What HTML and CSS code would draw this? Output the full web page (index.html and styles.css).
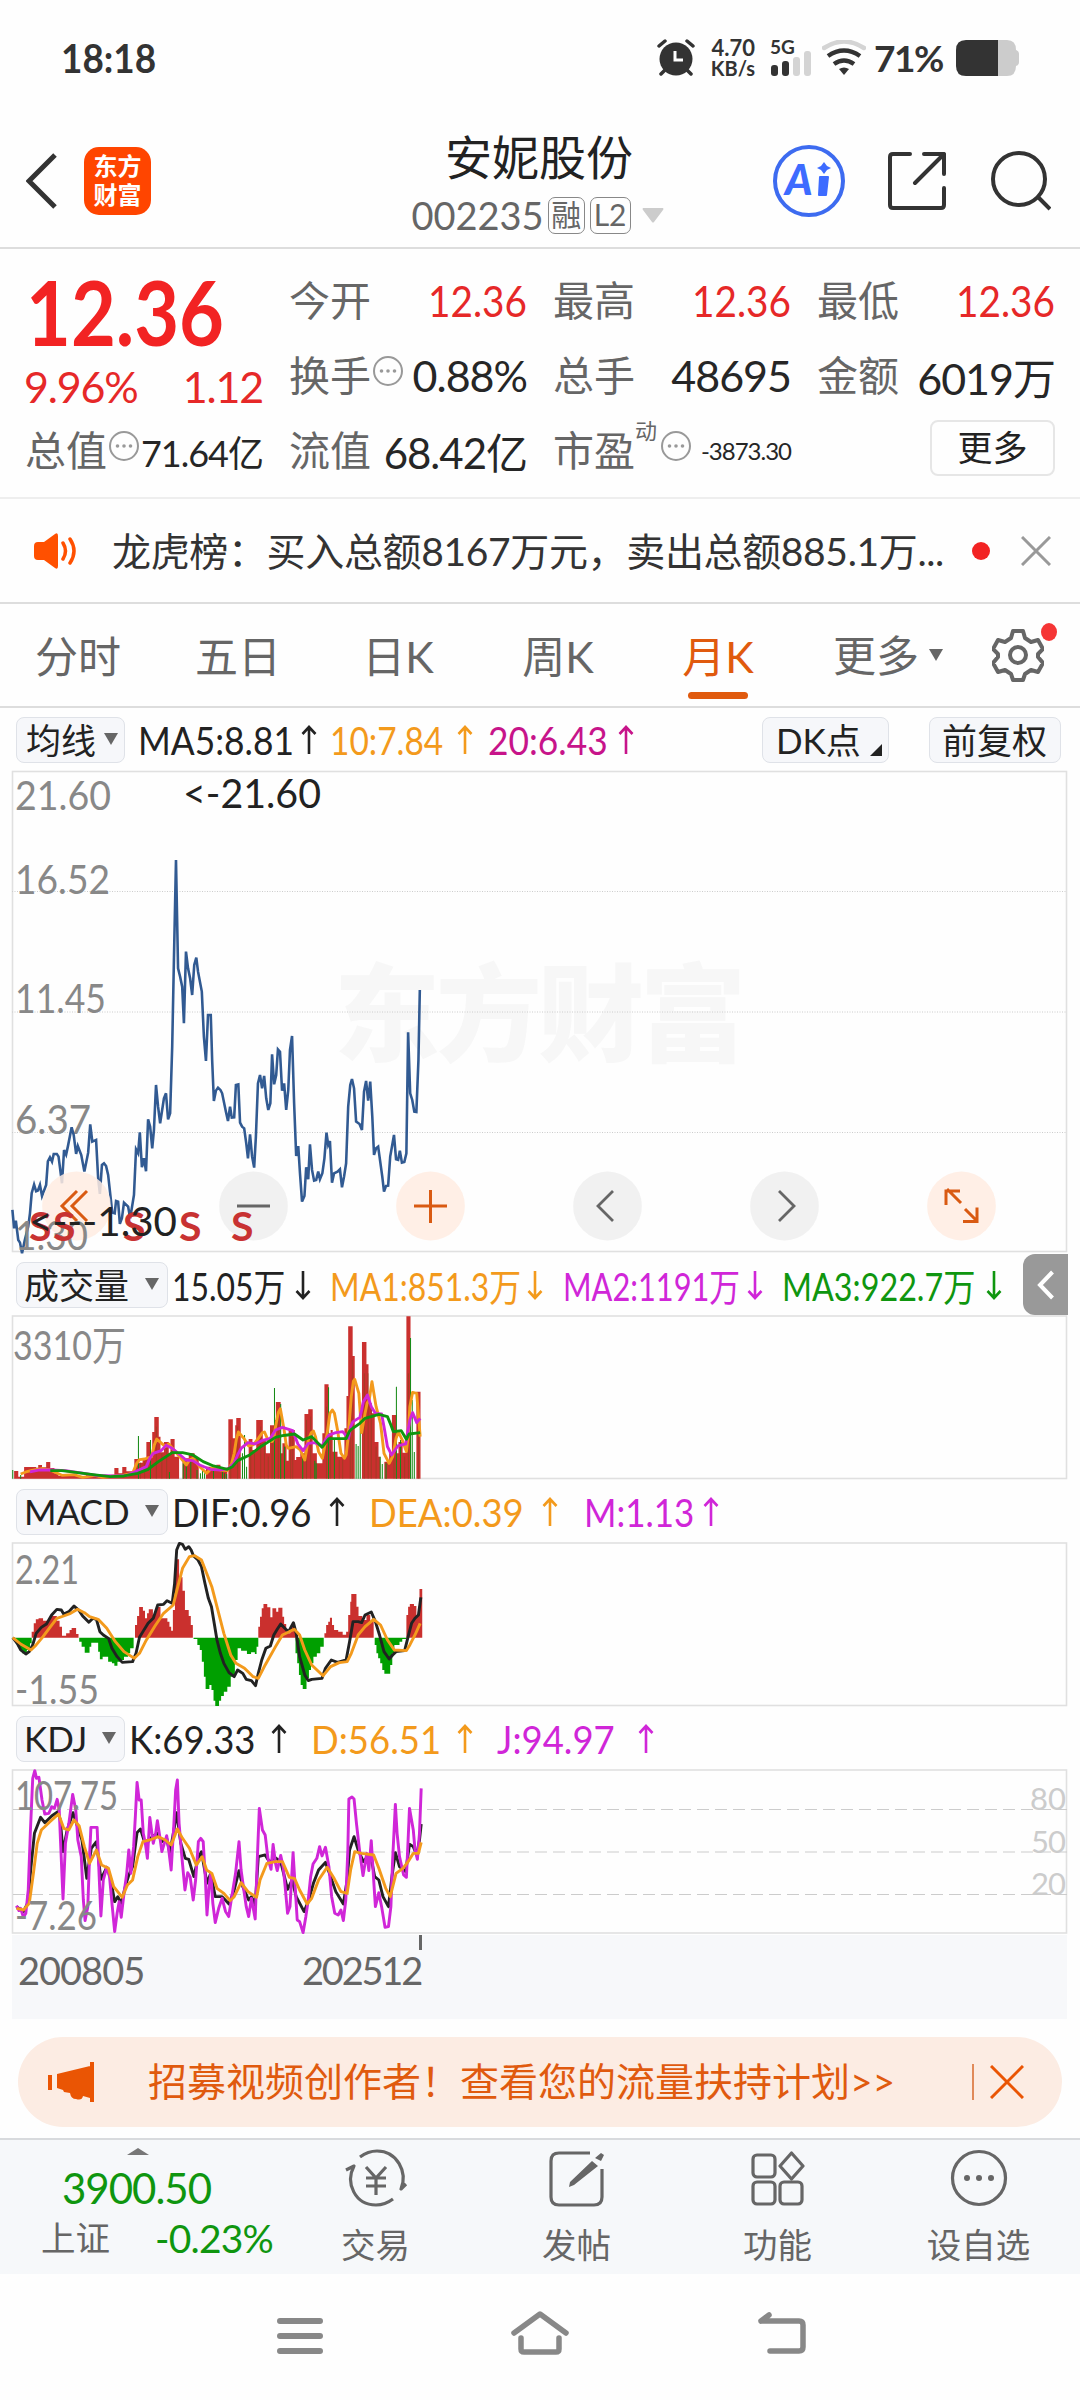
FILE: index.html
```html
<!DOCTYPE html>
<html lang="zh-CN">
  <head>
    <meta charset="utf-8">
    <title>安妮股份 002235</title>
    <link rel="stylesheet" href="styles.css">
  </head>
  <body>
    <svg class="symbols">
      <symbol id="up" viewBox="0 0 16 30"><path d="M8 29V2M1.500 9L8 2l6.500 7" fill="none" stroke="currentColor" stroke-width="2.600"/></symbol>
      <symbol id="down" viewBox="0 0 16 30"><path d="M8 1v27M1.500 21L8 28l6.500-7" fill="none" stroke="currentColor" stroke-width="2.600"/></symbol>
      <symbol id="info" viewBox="0 0 32 32">
        <circle cx="16" cy="16" r="14" fill="none" stroke="#999" stroke-width="2"/>
        <circle cx="9.500" cy="16" r="1.800" fill="#999"/><circle cx="16" cy="16" r="1.800" fill="#999"/><circle cx="22.500" cy="16" r="1.800" fill="#999"/>
      </symbol>
    </svg>

    <!-- phone status bar -->
    <div class="status-bar">
      <div class="clock"><span>18:18</span></div>
      <svg class="alarm" width="38" height="38" viewBox="0 0 38 38">
        <circle cx="19" cy="20" r="16.500" fill="#333"/>
        <path d="M2 7l6-5M36 7l-6-5M4 35l5-5M34 35l-5-5" stroke="#333" stroke-width="3.500" stroke-linecap="round"/>
        <path d="M18 12v9h8" fill="none" stroke="#fff" stroke-width="3"/>
      </svg>
      <div class="net-speed"><span class="speed">4.70</span><span class="unit">KB/s</span></div>
      <div class="signal">
        <span>5G</span>
        <svg width="42" height="26" viewBox="0 0 42 26">
          <rect x="1" y="15" width="7" height="11" rx="3" fill="#333"/><rect x="12" y="11" width="7" height="15" rx="3" fill="#333"/>
          <rect x="23" y="7" width="7" height="19" rx="3" fill="#d4d4d4"/><rect x="34" y="1" width="7" height="25" rx="3" fill="#d4d4d4"/>
        </svg>
      </div>
      <svg class="wifi" width="44" height="36" viewBox="0 0 44 36" fill="none" stroke-width="4.500">
        <path d="M2 8Q22-5 42 8" stroke="#d4d4d4" stroke-linecap="round"/>
        <path d="M6 16Q22 5 38 16M12 24Q22 17 32 24" stroke="#333"/>
        <path d="M17 29Q22 26 27 29L22 35z" fill="#333"/>
      </svg>
      <span class="percent">71%</span>
      <svg class="battery" width="64" height="36" viewBox="0 0 64 36">
        <path d="M42 0h9q9 0 9 10 3 1 3 4v8q0 3-3 4 0 10-9 10h-9z" fill="#ccc"/>
        <path d="M42 0H10Q0 0 0 10v16q0 10 10 10h32z" fill="#333"/>
      </svg>
    </div>

    <!-- title bar -->
    <div class="header">
      <div class="header-left">
        <svg width="32" height="56" viewBox="0 0 32 56"><path d="M29 2L3 28l26 26" fill="none" stroke="#333" stroke-width="5"/></svg>
        <div class="logo">东方<br>财富</div>
      </div>
      <div class="header-title">
        <div class="stock-name">安妮股份</div>
        <div class="stock-code"><span class="code">002235</span><span class="tag">融</span><span class="tag tag-l2">L2</span>
          <svg width="22" height="15" viewBox="0 0 22 15"><path d="M1 0h20q1 1 0 2L12 14q-1 1-2 0L1 2Q0 1 1 0z" fill="#ccc"/></svg></div>
      </div>
      <div class="header-right">
        <svg width="72" height="72" viewBox="0 0 72 72">
          <circle cx="36" cy="36" r="34" fill="none" stroke="#3d6bf0" stroke-width="4"/>
          <text class="ai-text" x="12" y="50">A</text>
          <path d="M47 31h8q1 0 1 1l-2 18q0 1-1 1h-7q-1 0-1-1l1-18q0-1 1-1zM51 17l3 4 4 2-4 2-3 4-3-4-4-2 4-2z" fill="#3d6bff"/>
        </svg>
        <svg class="share" width="58" height="58" viewBox="0 0 58 58" fill="none" stroke="#333" stroke-width="4" stroke-linecap="round" stroke-linejoin="round">
          <path d="M22 2H5Q2 2 2 5v48q0 3 3 3h48q3 0 3-3V36M36 2h20v20M56 2L27 31"/>
        </svg>
        <svg width="60" height="60" viewBox="0 0 60 60" fill="none" stroke="#333" stroke-width="4"><circle cx="28" cy="28" r="26"/><path d="M47 46l12 12"/></svg>
      </div>
    </div>

    <!-- quote -->
    <div class="quote">
      <div class="price-box">
        <div class="price">12.36</div>
        <div class="change"><span>9.96%</span><span>1.12</span></div>
      </div>
      <div class="cell"><i>今开</i><b class="red">12.36</b></div>
      <div class="cell"><i>最高</i><b class="red">12.36</b></div>
      <div class="cell"><i>最低</i><b class="red">12.36</b></div>
      <div class="cell"><i>换手</i><svg class="info"><use href="#info"/></svg><b class="turnover">0.88%</b></div>
      <div class="cell"><i>总手</i><b class="volume">48695</b></div>
      <div class="cell"><i>金额</i><b>6019万</b></div>
      <div class="cell"><i>总值</i><svg class="info"><use href="#info"/></svg><b class="total-value">71.64亿</b></div>
      <div class="cell"><i>流值</i><b class="float-value">68.42亿</b></div>
      <div class="cell"><i>市盈</i><sup>动</sup><svg class="info info-pe"><use href="#info"/></svg><b class="pe">-3873.30</b></div>
      <div class="cell"><div class="more-button">更多</div></div>
    </div>

    <!-- news strip -->
    <div class="news">
      <svg width="44" height="36" viewBox="0 0 44 36">
        <path d="M0 13q0-4 4-4h6L21 1q3-2 3 2v30q0 4-3 2L10 27H4q-4 0-4-4z" fill="#ff5000"/>
        <path d="M29 10q5 8 0 16M36 6q8 12 0 24" fill="none" stroke="#ff5000" stroke-width="3.500" stroke-linecap="round"/>
      </svg>
      <div class="news-text">龙虎榜：买入总额8167万元，卖出总额885.1万...</div>
      <span class="dot"></span>
      <svg class="news-close" width="30" height="30" viewBox="0 0 30 30"><path d="M1 1l28 28M29 1L1 29" stroke="#999" stroke-width="3"/></svg>
    </div>

    <!-- period tabs -->
    <div class="tabs">
      <div class="tab">分时</div>
      <div class="tab">五日</div>
      <div class="tab">日K</div>
      <div class="tab">周K</div>
      <div class="tab active">月K</div>
      <div class="tab-more">更多<span class="tri"></span></div>
      <div class="gear">
        <svg width="52" height="54" viewBox="0 0 52 54" fill="none" stroke="#666" stroke-width="4">
          <path d="M21 3h10l2 7 6 4 7-2 5 9-5 5v3l5 6-5 9-7-2-6 4-2 6H21l-2-6-6-4-7 2-5-9 5-6v-3l-5-5 5-9 7 2 6-4z" stroke-linejoin="round"/>
          <circle cx="26" cy="27" r="8"/>
        </svg>
        <span class="dot"></span>
      </div>
    </div>

    <!-- moving averages -->
    <div class="bar ma-bar">
      <div class="pill">均线<span class="tri"></span></div>
      <div class="val ma5"><span>MA5:8.81</span></div><svg class="arrow"><use href="#up"/></svg>
      <div class="val orange ma10"><span>10:7.84</span></div><svg class="arrow orange"><use href="#up"/></svg>
      <div class="val pink ma20"><span>20:6.43</span></div><svg class="arrow pink"><use href="#up"/></svg>
      <div class="pill dk">DK点<svg width="12" height="12"><path d="M12 0v12H0z" fill="#222"/></svg></div>
      <div class="pill fq">前复权</div>
    </div>
    <svg class="chart" width="1080" height="482" viewBox="0 771 1080 482">
      <text class="watermark" x="334" y="1053" textLength="412">东方财富</text>
      <rect x="12.500" y="771.500" width="1054" height="480" fill="none" stroke="#e0e0e0" stroke-width="1.600"/>
      <path d="M12 891.500H1067M12 1012H1067M12 1132.500H1067" stroke="#ccc" stroke-dasharray="1 1.500"/>
      <g class="axis-text">
        <text x="15" y="810" textLength="96" lengthAdjust="spacingAndGlyphs">21.60</text>
        <text x="15" y="894" textLength="95" lengthAdjust="spacingAndGlyphs">16.52</text>
        <text x="15" y="1013" textLength="91" lengthAdjust="spacingAndGlyphs">11.45</text>
        <text x="15" y="1134" textLength="76" lengthAdjust="spacingAndGlyphs">6.37</text>
      </g>
      <g transform="translate(0 760) scale(.3444 .3333)">
        <polyline class="price-line" points="36,1350 41,1405 46,1382 53,1440 58,1448 64,1480 72,1440 82,1400 87,1360 92,1300 99,1274 105,1294 110,1292 116,1275 122,1308 134,1275 139,1204 145,1192 151,1205 156,1182 165,1182 170,1190 180,1270 186,1170 192,1184 197,1160 208,1102 214,1125 221,1182 226,1158 236,1185 245,1235 256,1178 262,1093 268,1145 279,1140 285,1255 290,1302 296,1215 302,1210 308,1218 314,1245 326,1358 333,1360 337,1323 343,1325 348,1392 354,1375 360,1328 372,1340 378,1375 389,1305 395,1168 401,1180 406,1117 412,1222 418,1195 424,1234 430,1078 436,1100 442,1165 447,1110 453,975 459,1040 465,1090 476,1015 482,1000 488,1078 494,1060 500,860 505,600 511,300 517,625 523,650 529,680 534,790 540,575 546,625 552,655 558,705 564,615 570,593 575,635 586,695 592,830 598,903 604,765 612,765 616,900 621,1023 627,992 633,983 640,990 645,1000 656,1055 662,1083 668,1040 673,1073 680,1072 685,975 692,973 697,1088 703,1100 709,1105 715,1150 720,1195 726,1123 732,1190 738,1223 743,1130 749,970 755,945 761,985 767,948 773,1015 779,1050 785,1030 790,883 796,973 802,945 807,868 813,875 819,992 825,970 831,1050 837,990 842,870 848,828 854,1030 860,1188 866,1158 871,1240 877,1325 884,1308 889,1222 895,1258 900,1153 906,1230 912,1262 918,1260 924,1235 929,1258 936,1240 942,1195 948,1118 953,1155 958,1143 964,1268 970,1240 980,1235 987,1228 993,1282 999,1250 1005,1210 1011,1040 1017,975 1022,957 1028,985 1034,1085 1044,1092 1051,1110 1057,995 1063,963 1069,1022 1075,965 1081,1070 1086,1185 1092,1165 1098,1160 1104,1205 1110,1250 1115,1295 1121,1278 1127,1277 1133,1190 1144,1125 1150,1198 1156,1200 1161,1172 1167,1208 1174,1206 1180,1180 1185,817 1191,1000 1197,1020 1203,1055 1209,1056 1215,900 1219,690"/>
      </g>
      <!-- chart controls -->
      <g fill="#ffece2" fill-opacity=".85"><circle cx="76.500" cy="1206" r="34.400"/><circle cx="430.500" cy="1206" r="34.400"/><circle cx="961.500" cy="1206" r="34.400"/></g>
      <g fill="#eee" fill-opacity=".8"><circle cx="253.500" cy="1206" r="34.400"/><circle cx="607.500" cy="1206" r="34.400"/><circle cx="784.500" cy="1206" r="34.400"/></g>
      <path d="M77 1191l-15 15 15 15M87 1191l-15 15 15 15M414 1206h33M430.500 1190v33M961 1203l-14-14M946 1205v-14h14M965 1209l12 12M963 1221.500h14v-14" fill="none" stroke="#d95a12" stroke-width="3"/>
      <path d="M237 1206h33M613 1191l-15 15 15 15M779 1191l15 15-15 15" fill="none" stroke="#666" stroke-width="2.800"/>
      <g class="axis-text"><text x="15" y="1250" textLength="73" lengthAdjust="spacingAndGlyphs">1.30</text></g>
      <g class="sell"><text x="29" y="1241">S</text><text x="53" y="1241">S</text><text x="123" y="1241">S</text><text x="179" y="1241">S</text><text x="231" y="1241">S</text></g>
      <g class="mark"><text x="183" y="808" textLength="138" lengthAdjust="spacingAndGlyphs">&lt;-21.60</text><text x="29" y="1236" textLength="148" lengthAdjust="spacingAndGlyphs">&lt;---1.30</text></g>
    </svg>

    <!-- volume -->
    <div class="bar vol-bar">
      <div class="pill">成交量<span class="tri"></span></div>
      <div class="val v0"><span>15.05万</span></div><svg class="arrow"><use href="#down"/></svg>
      <div class="val orange v1"><span>MA1:851.3万</span></div><svg class="arrow orange"><use href="#down"/></svg>
      <div class="val magenta v2"><span>MA2:1191万</span></div><svg class="arrow magenta"><use href="#down"/></svg>
      <div class="val green v3"><span>MA3:922.7万</span></div><svg class="arrow green"><use href="#down"/></svg>
      <div class="side-tab"><svg width="18" height="30" viewBox="0 0 18 30"><path d="M15.500 2L3 15l12.500 13" fill="none" stroke="#fff" stroke-width="4"/></svg></div>
    </div>
    <svg class="chart" width="1080" height="164" viewBox="0 1316 1080 164">
      <rect x="12.500" y="1316" width="1054" height="162.500" fill="none" stroke="#e0e0e0" stroke-width="1.600"/>
      <g class="axis-text"><text x="13" y="1360" textLength="113" lengthAdjust="spacingAndGlyphs">3310万</text></g>
      <g transform="translate(0 1240) scale(.3444 .3333)">
        <path fill="#ca302e" d="M41 716V693H53V710H70V681H105V683H111V675H122V682H134V666H146V684H158V700H170V708H180V703H215V708H250V705H285V712H332V684H344V700H355V681H367V694H390V657H402V668H414V656H425V606H437V640H442V576H448V531H461V590H466V637H476V606H490V640H495V597H507V650H520V716H530V660H536V655H548V640H565V655H577V716H598V680H615V690H628V674H640V685H660V716H663V538H676V595H683V556H686V534H699V716H722V597H733V630H744V540H763V600H772V640H784V556H797V540H801V486H815V640H820V610H832V662H838V570H856V660H860V651H872V640H884V522H895V508H908V640H920V670H936V580H942V433H954V580H960V570H966V635H980V650H1000V565H1006V468H1011V259H1024V348H1030V716H1051V306H1064V373H1070V490H1080V520H1088V606H1099V650H1104V716H1116V665H1130V640H1138V525H1151V640H1157V606H1169V638H1180V229H1192V716H1209V455H1221V716z"/>
        <path class="thin" d="M37 716V690M60 716V705M402 716V588M437 716V600M492 716V696M532 716V670M541 716V675M554 716V665M572 716V690M582 716V700M588 716V688M594 716V700M620 716V690M646 716V695M652 716V700M658 716V702M704 716V640M710 716V585M716 716V680M797 716V444M815 716V492M826 716V620M879 716V655M914 716V662M918 716V670M954 716V442M971 716V600M1034 716V612M1040 716V618M1046 716V560M1104 716V650M1110 716V672M1121 716V670M1151 716V440M1163 716V600M1192 716V294M1197 716V480M1203 716V636"/>
        <path class="stripe" d="M408 716V668M420 716V660M454 716V560M470 716V640M484 716V620M670 716V600M690 716V560M728 716V610M739 716V640M757 716V560M768 716V610M779 716V650M790 716V570M808 716V510M844 716V590M850 716V590M890 716V540M902 716V530M948 716V500M960 716V590M985 716V660M995 716V660M1017 716V500M1023 716V360M1058 716V400M1069 716V400M1078 716V500M1092 716V620M1144 716V560M1175 716V650M1186 716V400M1215 716V500"/>
        <polyline class="line orange" points="60,702 75,696 100,690 122,686 146,690 160,697 180,706 215,704 240,712 275,706 300,712 330,708 355,706 385,700 397,670 405,659 420,657 440,650 448,615 455,597 480,620 490,612 505,630 520,648 541,675 550,660 560,655 580,680 600,700 615,684 640,690 660,692 672,672 680,640 686,600 692,576 708,595 722,618 735,615 750,595 762,578 768,576 778,600 790,605 795,595 800,560 808,518 814,506 825,570 831,615 837,625 860,620 872,630 885,660 895,600 904,578 910,573 916,590 925,635 936,655 950,580 958,520 965,510 971,520 980,570 990,640 1000,655 1005,645 1010,600 1020,470 1026,424 1030,418 1042,460 1050,578 1060,520 1066,490 1072,480 1080,425 1092,500 1105,550 1115,640 1130,670 1140,650 1150,595 1157,576 1168,600 1180,635 1185,590 1190,500 1198,457 1210,460 1220,590"/>
        <polyline class="line magenta" points="87,696 115,690 150,690 190,692 230,698 280,706 330,708 370,706 400,692 425,680 435,655 445,640 468,632 482,616 500,625 520,642 540,660 560,662 580,675 610,688 640,690 663,686 680,668 690,645 700,625 720,608 740,612 760,602 785,595 800,570 820,562 850,572 865,612 880,632 895,610 915,608 935,618 945,600 955,585 975,578 995,575 1012,595 1018,560 1025,545 1045,532 1050,510 1055,485 1067,465 1078,500 1090,520 1108,522 1115,560 1125,620 1137,645 1155,618 1178,612 1190,540 1198,518 1210,548 1220,535"/>
        <polyline class="line green" points="146,692 180,692 220,697 270,704 320,710 360,708 400,700 430,688 460,665 500,638 530,638 560,645 590,665 620,678 660,688 675,680 690,662 725,645 760,618 785,602 800,592 820,587 835,585 855,582 880,600 905,590 935,622 948,605 955,596 1005,596 1014,575 1020,568 1045,550 1060,535 1100,523 1125,530 1135,555 1142,575 1165,572 1180,598 1188,582 1220,578"/>
      </g>
    </svg>

    <!-- MACD -->
    <div class="bar">
      <div class="pill macd-pill">MACD<span class="tri"></span></div>
      <div class="val m0"><span>DIF:0.96</span></div><svg class="arrow"><use href="#up"/></svg>
      <div class="val orange m1"><span>DEA:0.39</span></div><svg class="arrow orange"><use href="#up"/></svg>
      <div class="val magenta m2"><span>M:1.13</span></div><svg class="arrow magenta"><use href="#up"/></svg>
    </div>
    <svg class="chart" width="1080" height="164" viewBox="0 1543 1080 164">
      <rect x="12.500" y="1543" width="1054" height="162.500" fill="none" stroke="#e0e0e0" stroke-width="1.600"/>
      <g class="axis-text"><text x="15" y="1584" textLength="64" lengthAdjust="spacingAndGlyphs">2.21</text><text x="15" y="1704" textLength="84" lengthAdjust="spacingAndGlyphs">-1.55</text></g>
      <g transform="translate(0 1490) scale(.3444 .3333)">
        <path fill="#ca302e" d="M92 443V425H98V400H104V388H112V385H125V392H140V388H146V378H165V392H173V410H180V437H192V430H202V420H208V414H221V432H228V443zM392 443V405H398V378H404V351H415V362H421V385H427V370H432V358H444V375H450V365H455V351H466V385H486V395H492V410H497V422H502V360H508V208H520V262H530V302H537V360H548V378H554V405H560V443zM750 443V410H755V380H760V355H765V342H776V352H785V382H791V355H802V365H808V353H820V380H825V402H831V425H836V430H843V415H848V400H855V425H861V443zM942 443V430H947V405H953V395H958V383H964V405H970V420H982V425H995V434H1005V425H1011V375H1017V335H1020V312H1035V350H1041V378H1052V390H1064V375H1075V395H1085V443zM1180 443V375H1185V350H1190V342H1202V348H1209V375H1214V350H1218V297H1226V443z"/>
        <path fill="#009f00" d="M40 443V450H46V463H52V472H58V482H64V490H78V480H87V460H92V443zM230 443V455H237V470H246V488H260V470H265V458H285V485H290V508H298V500H314V515H325V520H332V527H341V515H350V510H360V500H372V490H378V475H388V443zM562 443V447H573V465H580V480H586V515H592V560H597V597H608V585H614V600H620V632H625V648H636V632H642V618H650V605H660V590H670V560H682V510H690V475H700V482H717V492H729V487H740V492H745V470H750V443zM858 443V490H863V520H868V555H873V585H879V597H890V565H897V540H903V520H910V500H920V490H930V470H940V443zM1088 443V465H1093V490H1098V505H1104V520H1110V540H1116V551H1133V525H1139V490H1145V465H1160V455H1168V447H1180V443z"/>
        <polyline class="line black" points="37,443 50,460 60,480 75,492 85,485 95,465 105,430 120,412 135,402 150,375 165,358 178,360 185,372 200,365 215,348 230,362 240,378 258,397 270,385 280,388 290,425 300,435 315,445 325,475 340,500 355,517 385,515 395,490 405,442 415,425 430,400 445,385 458,345 475,343 485,332 500,340 507,280 513,180 521,160 530,163 538,178 548,170 555,180 562,198 575,210 585,230 595,280 605,325 614,350 622,400 630,450 640,490 650,520 665,548 680,560 690,540 705,550 715,568 730,572 742,587 750,550 760,510 772,475 785,468 795,435 805,418 815,402 830,418 838,425 852,398 860,430 870,500 885,555 895,572 905,568 935,565 945,535 962,510 980,517 1005,510 1015,455 1025,395 1040,395 1050,398 1060,375 1078,366 1090,395 1102,435 1115,485 1130,507 1140,495 1150,485 1175,482 1185,440 1195,400 1205,385 1215,375 1222,322"/>
        <polyline class="line orange" points="37,443 60,462 90,480 105,465 125,440 145,412 165,385 185,378 205,370 225,358 245,368 260,380 285,388 310,415 335,455 360,485 390,505 405,490 425,450 450,408 475,370 503,345 515,295 530,235 550,200 565,197 585,210 600,250 615,290 630,350 650,430 670,495 685,520 710,535 735,560 750,565 770,525 800,470 820,435 840,425 855,418 870,435 885,480 905,525 938,557 960,530 985,518 1008,515 1020,490 1040,435 1060,410 1085,388 1105,405 1125,450 1145,480 1180,482 1190,465 1205,435 1220,400"/>
      </g>
    </svg>

    <!-- KDJ -->
    <div class="bar">
      <div class="pill kdj-pill">KDJ<span class="tri"></span></div>
      <div class="val k0"><span>K:69.33</span></div><svg class="arrow"><use href="#up"/></svg>
      <div class="val orange k1"><span>D:56.51</span></div><svg class="arrow orange"><use href="#up"/></svg>
      <div class="val magenta k2"><span>J:94.97</span></div><svg class="arrow magenta"><use href="#up"/></svg>
    </div>
    <svg class="chart" width="1080" height="165" viewBox="0 1770 1080 165">
      <rect x="12.500" y="1770" width="1054" height="163" fill="none" stroke="#e0e0e0" stroke-width="1.600"/>
      <path d="M13 1809.500H1067M13 1852H1067M13 1894.500H1067" stroke="#ccc" stroke-width="1.200" stroke-dasharray="12 6"/>
      <g class="level"><text x="1030" y="1810" textLength="36">80</text><text x="1031" y="1853" textLength="35">50</text><text x="1031" y="1895" textLength="35">20</text></g>
      <g transform="translate(0 1700) scale(.3444 .3333)">
        <polyline class="line black" points="48,620 68,635 80,610 90,500 100,400 118,352 130,368 150,348 168,335 175,360 183,455 195,390 212,338 225,380 238,420 252,535 265,445 280,425 293,538 310,502 320,530 333,605 342,590 352,610 365,555 374,525 385,500 398,398 408,387 418,420 430,425 442,410 457,400 470,425 484,415 493,460 505,390 513,338 525,430 538,475 548,478 563,530 575,475 585,455 601,550 612,520 625,590 645,590 665,612 680,570 694,512 705,560 722,600 730,590 741,615 750,470 770,465 785,490 795,470 815,485 835,568 848,540 860,590 883,635 895,605 910,550 925,510 945,487 960,530 975,575 997,612 1008,540 1015,450 1028,410 1040,450 1055,485 1075,460 1088,530 1100,540 1112,590 1128,620 1138,530 1148,458 1160,500 1178,515 1189,433 1200,440 1210,465 1218,420 1223,372"/>
        <polyline class="line magenta" points="48,617 55,632 60,625 68,652 75,640 82,570 88,400 95,235 101,212 106,235 113,232 122,300 130,342 142,340 150,320 158,325 166,298 172,330 176,430 183,597 190,430 200,370 211,283 220,330 226,420 236,470 242,600 247,662 255,620 260,470 264,382 282,382 288,530 293,648 300,540 310,502 318,530 326,620 333,695 340,640 346,605 352,652 360,580 368,520 374,450 380,520 388,440 393,350 398,247 404,300 410,300 416,400 422,430 428,475 435,352 445,430 452,400 457,362 464,410 470,455 484,407 490,450 497,510 505,370 510,270 515,240 520,370 528,470 537,570 545,518 552,530 561,600 568,540 576,425 583,415 590,425 596,530 601,645 607,560 612,520 618,610 625,668 635,625 645,595 655,635 664,650 673,590 684,520 694,425 700,510 708,570 715,620 722,650 730,595 741,657 747,480 753,325 762,390 770,405 778,475 787,508 793,433 800,490 805,512 815,466 822,500 828,560 835,640 842,620 851,458 857,560 863,660 870,665 880,698 888,650 895,600 902,530 909,492 920,475 928,440 935,468 945,442 955,500 963,590 972,640 982,645 990,630 997,662 1004,600 1010,450 1013,297 1022,291 1028,297 1035,370 1045,460 1054,527 1065,460 1071,512 1078,422 1085,540 1090,620 1100,578 1108,620 1118,682 1128,680 1135,620 1140,480 1148,313 1153,400 1160,470 1172,525 1180,532 1185,420 1189,325 1200,390 1205,450 1212,478 1218,400 1223,265"/>
        <polyline class="line orange" points="48,625 68,630 85,610 97,520 108,430 120,390 145,365 170,342 185,385 200,390 215,360 230,378 245,440 260,490 280,450 295,495 315,505 330,560 355,592 370,555 385,540 400,470 415,425 435,420 460,410 480,420 497,435 515,387 530,415 550,445 570,495 587,470 600,510 615,520 630,565 650,580 668,602 680,590 700,548 720,575 745,592 755,540 775,490 800,485 820,485 840,532 855,535 870,570 892,612 905,595 925,540 950,502 970,535 990,575 1008,580 1018,510 1030,455 1050,460 1085,465 1100,505 1120,565 1133,590 1150,520 1170,505 1185,485 1200,460 1215,460 1223,427"/>
      </g>
      <g class="axis-text"><text x="15" y="1810" textLength="103" lengthAdjust="spacingAndGlyphs">107.75</text><text x="15" y="1938" textLength="82" lengthAdjust="spacingAndGlyphs" dy="-8">-7.26</text></g>
    </svg>
    <div class="dates"><span class="date-start">200805</span><span class="date-end">202512</span></div>

    <!-- promo -->
    <div class="promo">
      <svg width="48" height="40" viewBox="0 0 48 40" fill="#ea5504"><path d="M0 13h4v15H0zM9 12L42 4v32l-7-2q-1 5-7 3-5 0-6-6l-6-1-1-2-6-2zM42 0h4v40h-4z"/></svg>
      <div class="promo-text">招募视频创作者！查看您的流量扶持计划&gt;&gt;</div>
      <span class="promo-line"></span>
      <svg width="34" height="34" viewBox="0 0 34 34"><path d="M1 1l32 32M33 1L1 33" stroke="#ea5504" stroke-width="3"/></svg>
    </div>

    <!-- bottom toolbar -->
    <div class="toolbar">
      <div class="ticker">
        <span class="tri-up"></span>
        <div class="index-value">3900.50</div>
        <div class="index-row"><span>上证</span><span class="index-change">-0.23%</span></div>
      </div>
      <div class="tool">
        <svg width="66" height="58" viewBox="0 0 66 58" fill="none" stroke="#666" stroke-width="3.200">
          <path d="M17 8Q25 2 34 2c20 0 31 21 24 38l5-5M50 50Q42 56 33 56C12 56 2 34 11 17l-8 4M23 18l10 11 10-11M33 29v17M23 29h20M23 37h20" stroke-linejoin="round"/>
        </svg>交易
      </div>
      <div class="tool">
        <svg width="58" height="58" viewBox="0 0 58 58" fill="none" stroke="#666" stroke-width="3.200">
          <path d="M42 4H11Q3 4 3 12v36q0 8 8 8h35q8 0 8-8V20"/><path d="M44 12l6 5-24 19-5 2 1-5zM47 9l6-5 3 2-3 6z" fill="#666" stroke="none"/>
        </svg>发帖
      </div>
      <div class="tool">
        <svg width="54" height="58" viewBox="0 0 54 58" fill="none" stroke="#666" stroke-width="3.200">
          <rect x="2" y="6" width="22" height="22" rx="4"/><rect x="2" y="33" width="22" height="22" rx="4"/><rect x="29" y="33" width="22" height="22" rx="4"/>
          <path d="M40.500 4L52 17 40.500 30 29 17z" stroke-linejoin="round"/>
        </svg>功能
      </div>
      <div class="tool">
        <svg width="58" height="58" viewBox="0 0 58 58"><circle cx="29" cy="29" r="26.500" fill="none" stroke="#666" stroke-width="3.200"/><circle cx="17" cy="29" r="3" fill="#666"/><circle cx="29" cy="29" r="3" fill="#666"/><circle cx="41" cy="29" r="3" fill="#666"/></svg>设自选
      </div>
    </div>

    <!-- system navigation -->
    <div class="sys-nav">
      <svg width="46" height="46" viewBox="0 0 46 46" stroke="#888" stroke-width="6" stroke-linecap="round"><path d="M3 11h40M3 26h40M3 41h40"/></svg>
      <svg width="60" height="46" viewBox="0 0 60 46" fill="none" stroke="#888" stroke-width="5.500" stroke-linecap="round" stroke-linejoin="round"><path d="M4 23L30 4l26 19M11 28v11q0 3 3 3h32q3 0 3-3V28"/></svg>
      <svg width="50" height="46" viewBox="0 0 50 46" fill="none" stroke="#888" stroke-width="5.500" stroke-linecap="round" stroke-linejoin="round"><path d="M4 11h38q4 0 4 4v22q0 4-4 4H13M4 11l8-6"/></svg>
    </div>
  </body>
</html>
```

FILE: styles.css
```css
* {
  box-sizing: border-box;
}
body {
  margin: 0;
  width: 1080px;
  height: 2400px;
  overflow: hidden;
  background-color: #fefefe;
  color: #222;
  font-family: Lato, "Noto Sans CJK SC", sans-serif;
  white-space: nowrap;
}
svg {
  display: block;
  flex-shrink: 0;
}
.symbols {
  width: 0;
  height: 0;
}
.red { color: #e62828; }
.orange { color: #f39a1c; }
.magenta { color: #d026d8; }
.pink { color: #c7148a; }
.green { color: #0f960f; }

/* status bar */
.status-bar {
  height: 115px;
  padding-left: 61px;
  display: flex;
  align-items: center;
  color: #333;
}
.clock {
  width: 596px;
  font-size: 41px;
  font-weight: bold;
}
.clock span {
  display: inline-block;
  transform: scaleX(.9);
  transform-origin: left;
}
.net-speed {
  width: 50px;
  margin-left: 10px;
  display: flex;
  flex-direction: column;
  align-items: flex-end;
  font-size: 20px;
  line-height: 20px;
  font-weight: bold;
}
.speed {
  font-size: 22px;
}
.signal {
  margin-left: 15px;
  font-size: 19px;
  line-height: 14px;
  font-weight: bold;
  height: 36px;
}
.signal svg {
  margin-top: -4px;
}
.wifi {
  margin-left: 10px;
}
.percent {
  width: 73px;
  margin-left: 8px;
  font-size: 37px;
  font-weight: bold;
  letter-spacing: -1.500px;
}
.battery {
  margin-left: 9px;
}

/* header */
.header {
  height: 134px;
  border-bottom: 2px solid #ddd;
  display: grid;
  grid-template-columns: 380px 318px 382px;
}
.header-left {
  display: flex;
  align-items: center;
  padding-left: 26px;
}
.logo {
  width: 67px;
  height: 68px;
  margin-left: 26px;
  padding: 4px 0;
  border-radius: 15px;
  background-color: #ff4500;
  color: white;
  font-size: 24px;
  line-height: 29px;
  font-weight: bold;
  text-align: center;
}
.header-title {
  text-align: center;
  padding-top: 13px;
}
.stock-name {
  font-size: 47px;
  line-height: 58px;
}
.stock-code {
  display: flex;
  justify-content: center;
  align-items: center;
  height: 58px;
  padding-right: 3px;
  color: #666;
}
.code {
  font-size: 38px;
  margin-right: 4px;
}
.tag {
  width: 37px;
  height: 37px;
  border: 1.500px solid #888;
  border-radius: 7px;
  font-size: 30px;
  line-height: 33px;
  text-align: center;
}
.tag-l2 {
  width: 41px;
  margin: 0 11px 0 5px;
}
.header-right {
  display: flex;
  align-items: center;
  justify-content: flex-end;
  padding-right: 29px;
}
.share {
  margin: 0 45px 0 43px;
}
.ai-text {
  font-size: 42px;
  font-weight: 900;
  font-style: italic;
  fill: #3d6bff;
}

/* quote */
.quote {
  height: 250px;
  padding: 14px 0 0 26px;
  border-bottom: 2px solid #eee;
  display: grid;
  grid-template-columns: repeat(4, 237px);
  grid-template-rows: repeat(3, 75px);
  column-gap: 27px;
}
.price-box {
  grid-row: span 2;
  color: #e62828;
}
.price {
  font-size: 89px;
  line-height: 98px;
  font-weight: bold;
  transform: scaleX(.87);
  transform-origin: left;
  color: #f22323;
}
.change {
  display: flex;
  justify-content: space-between;
  font-size: 43px;
  line-height: 52px;
  margin-left: -2px;
  letter-spacing: -1.200px;
}
.cell {
  display: flex;
  align-items: center;
  font-size: 41px;
  color: #666;
}
.cell i {
  font-style: normal;
  margin: -5px 0 0 -1px;
}
.cell b {
  margin-left: auto;
  font-weight: normal;
  font-size: 43px;
  letter-spacing: -1px;
  color: #262626;
}
.cell b.red {
  color: #e62828;
  letter-spacing: 0;
  transform: scaleX(.9);
  transform-origin: right;
}
.info {
  width: 32px;
  height: 32px;
  margin: -9px 0 0 1px;
}
.cell sup {
  font-size: 22px;
  line-height: 24px;
  margin-top: -40px;
  width: 24px;
}
.cell b.total-value { font-size: 36px; }
.cell b.float-value { letter-spacing: -1px; font-size: 42px; }
.cell b.pe { font-size: 24px; letter-spacing: -1px; }
.more-button {
  width: 125px;
  height: 56px;
  margin: -5px 0 0 auto;
  border: 2px solid #e6e6e6;
  border-radius: 8px;
  text-align: center;
  font-size: 35px;
  line-height: 50px;
  color: #222;
}

/* news */
.news {
  height: 105px;
  padding-left: 34px;
  border-bottom: 2px solid #ddd;
  display: flex;
  align-items: center;
}
.news-text {
  width: 860px;
  margin: -4px 0 0 34px;
  font-size: 39px;
  letter-spacing: -.350px;
  color: #333;
}
.dot {
  width: 18px;
  height: 18px;
  border-radius: 50%;
  background-color: #f22323;
}
.news-close {
  margin-left: 31px;
}

/* tabs */
.tabs {
  height: 104px;
  border-bottom: 2px solid #ddd;
  display: flex;
  font-size: 43px;
  line-height: 105px;
  color: #666;
}
.tab {
  width: 160px;
  padding-right: 4px;
  text-align: center;
  display: flex;
  flex-direction: column;
  align-items: center;
}
.active {
  color: #e05a0e;
}
.active::after {
  content: "";
  width: 60px;
  height: 7px;
  margin-top: -17px;
  border-radius: 4px;
  background-color: #e05a0e;
}
.tab-more {
  width: 157px;
  padding-left: 33px;
  display: flex;
  align-items: center;
}
.tri {
  border: 7px solid transparent;
  border-top: 12px solid #666;
  border-bottom: 0;
}
.tab-more .tri {
  margin-left: 10px;
}
.gear {
  width: 100px;
  display: flex;
  align-items: center;
  padding-left: 35px;
}
.gear .dot {
  margin: -46px 0 0 -3px;
  background-color: #f53535;
}

/* indicator bars */
.bar {
  height: 63px;
  padding-left: 16px;
  display: flex;
  align-items: center;
}
.bar > * {
  flex-shrink: 0;
}
.pill {
  width: 109px;
  height: 46px;
  margin-right: 4px;
  padding: 0 8px 2px 7px;
  border: 1.500px solid #dfe2e8;
  border-radius: 8px;
  background-color: #f6f7fa;
  display: flex;
  align-items: center;
  justify-content: space-between;
  font-size: 35px;
}
.vol-bar .pill, .macd-pill {
  width: 152px;
}
.ma-bar .pill {
  padding-right: 6px;
  padding-left: 9px;
  font-size: 35px;
  margin-right: 13px;
}
.ma-bar .dk {
  width: 127px;
  padding: 0 6px 2px 13px;
  margin: 0 40px 0 128px;
}
.dk svg {
  margin-top: 22px;
}
.ma-bar .fq {
  width: 132px;
  padding: 0 12px 2px;
  margin: 0;
}
.val {
  font-size: 38px;
}
.val span {
  display: inline-block;
  transform: scaleX(.96);
  transform-origin: left;
}
.arrow {
  width: 16px;
  height: 30px;
}
.ma5 { width: 163px; }
.ma10 { width: 127px; margin-left: 13px; }
.ma20 { width: 130px; margin-left: 15px; }
.v0 { width: 123px; }
.v1 { width: 197px; margin-left: 19px; }
.v2 { width: 184px; margin-left: 20px; }
.v3 { width: 204px; margin-left: 19px; }
.m0 { width: 157px; }
.m1 { width: 173px; margin-left: 24px; }
.m2 { width: 119px; margin-left: 26px; }
.k0 { width: 142px; }
.k1 { width: 146px; margin-left: 24px; }
.k2 { width: 141px; margin-left: 24px; }
.ma5 span { transform: scaleX(.93); }
.ma10 span { transform: scaleX(.88); }
.ma20 span { transform: scaleX(.93); }
.v0 span { transform: scaleX(.84); }
.v1 span { transform: scaleX(.84); }
.v2 span { transform: scaleX(.81); }
.v3 span { transform: scaleX(.85); }
.m2 span { transform: scaleX(.92); }
.side-tab {
  width: 45px;
  height: 61px;
  margin-left: 21px;
  padding: 16px 0 0 14px;
  border-radius: 12px 0 0 12px;
  background-color: #999;
}

/* charts */
.chart {
  overflow: visible;
}
.axis-text {
  font-size: 40px;
  fill: #888;
}
.mark {
  font-size: 41px;
  fill: #222;
}
.sell {
  font-size: 41px;
  font-weight: bold;
  fill: #c83232;
}
.level {
  font-size: 31px;
  fill: #ccc;
}
.watermark {
  font-family: "Noto Sans CJK SC", sans-serif;
  font-size: 106px;
  font-weight: 900;
  fill: #f7f7f7;
}
.price-line {
  fill: none;
  stroke: #315a92;
  stroke-width: 7.500;
}
.line {
  fill: none;
  stroke: currentColor;
  stroke-width: 8.500;
  stroke-linejoin: round;
}
.black { color: #222; }
.thin {
  stroke: #178a17;
  stroke-width: 3;
}
.stripe {
  stroke: #7c4a1c;
  stroke-width: 1.500;
}
.dates {
  width: 1055px;
  height: 84px;
  margin-left: 12px;
  padding: 12px 0 0 6px;
  background-color: #f7f8fa;
  font-size: 38px;
  color: #666;
  display: flex;
}
.date-start {
  width: 284px;
  letter-spacing: -1px;
}
.date-end {
  letter-spacing: -2.200px;
}
.date-end::before {
  content: "";
  display: block;
  width: 3px;
  height: 15px;
  margin: -12px 0 -3px 117px;
  background-color: #666;
}

/* promo */
.promo {
  width: 1044px;
  height: 90px;
  margin: 18px 0 11px 18px;
  padding-left: 30px;
  border-radius: 45px;
  background-color: #fcece3;
  color: #e05a0e;
  display: flex;
  align-items: center;
}
.promo-text {
  width: 824px;
  margin: -6px 0 0 52px;
  font-size: 39px;
}
.promo-line {
  width: 2px;
  height: 36px;
  margin-right: 16px;
  background-color: #e08a5a;
}

/* toolbar */
.toolbar {
  height: 136px;
  border-top: 2px solid #d8dadd;
  background-color: #f6f8fa;
  display: flex;
  color: #666;
  font-size: 34.500px;
}
.ticker {
  width: 275px;
}
.tri-up {
  display: block;
  width: 0;
  margin: 8px 0 0 127px;
  border: 11px solid transparent;
  border-bottom: 7px solid #777;
  border-top: 0;
}
.index-value {
  margin: 8px 0 0 62px;
  font-size: 42px;
  line-height: 50px;
  letter-spacing: -1px;
  color: #0f960f;
}
.index-row {
  display: flex;
  justify-content: space-between;
  align-items: center;
  padding: 0 2px 0 41px;
  line-height: 50px;
}
.index-change {
  font-size: 39px;
  letter-spacing: -.800px;
  color: #0f960f;
}
.tool {
  width: 201px;
  padding-top: 9px;
  display: flex;
  flex-direction: column;
  align-items: center;
  line-height: 75px;
}

/* system navigation */
.sys-nav {
  height: 126px;
  padding: 36px 0 0 277px;
  display: flex;
}
.sys-nav svg {
  margin-right: 187px;
}
```
